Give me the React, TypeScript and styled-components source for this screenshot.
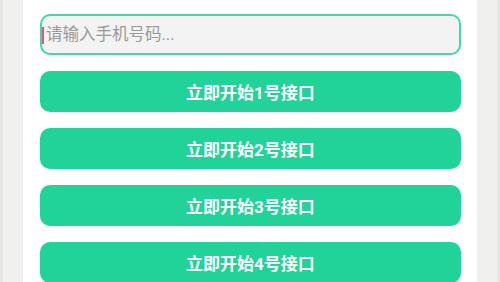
import React from "react";
import styled, { createGlobalStyle } from "styled-components";

const GlobalStyle = createGlobalStyle`
  html, body {
    margin: 0;
    padding: 0;
    background: #f0f0ee;
    font-family: Roboto, "Noto Sans CJK SC", "Liberation Sans", sans-serif;
  }
`;

const Frame = styled.div`
  display: flex;
  width: 500px;
  height: 282px;
  overflow: hidden;
`;

const Gutter = styled.div<{ $side: "left" | "right" }>`
  width: 23px;
  flex-shrink: 0;
  box-sizing: border-box;
  background: #f0f0ee;
  ${(p) => (p.$side === "left" ? "border-left: 3px solid #e6e6e5;" : "border-right: 3px solid #e6e6e5;")}
`;

const Panel = styled.main`
  flex: 1;
  background: #ffffff;
  padding: 14px 16px 0 17px;
  display: flex;
  flex-direction: column;
  gap: 16px;
`;

const Field = styled.div`
  position: relative;
  height: 41px;
  flex-shrink: 0;
  box-sizing: border-box;
  border: 2px solid #3fdb9f;
  border-radius: 10px;
  background: #f3f3f3;
  display: flex;
  align-items: center;
`;

const Caret = styled.span`
  position: absolute;
  left: 0px;
  top: 11px;
  width: 2px;
  height: 17px;
  background: #ee4f86;
`;

const PhoneInput = styled.input`
  flex: 1;
  border: none;
  outline: none;
  background: transparent;
  padding: 0 0 0 4px;
  font-size: 16.5px;
  color: #333;
  font-family: Roboto, "Noto Sans CJK SC", sans-serif;

  &::placeholder {
    color: #9a9a9a;
  }
`;

const StartButton = styled.button`
  height: 41px;
  flex-shrink: 0;
  border: none;
  border-radius: 10px;
  background: #22d399;
  color: #ffffff;
  font-size: 17px;
  font-weight: bold;
  font-family: Roboto, "Noto Sans CJK SC", sans-serif;
  cursor: pointer;
  padding: 0;
`;

const App = () => {
  const lines = [1, 2, 3, 4];
  return (
    <>
      <GlobalStyle />
      <Frame>
        <Gutter $side="left" />
        <Panel>
          <Field>
            <Caret />
            <PhoneInput placeholder="请输入手机号码..." />
          </Field>
          {lines.map((n) => (
            <StartButton key={n}>{`立即开始${n}号接口`}</StartButton>
          ))}
        </Panel>
        <Gutter $side="right" />
      </Frame>
    </>
  );
};

export default App;
